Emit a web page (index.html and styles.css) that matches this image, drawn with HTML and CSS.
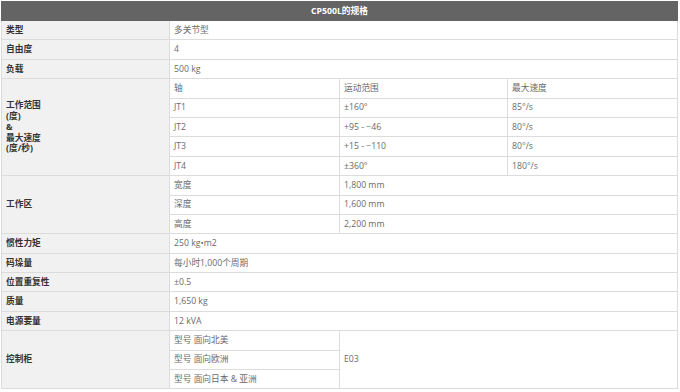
FILE: index.html
```html
<!DOCTYPE html>
<html lang="zh-CN">
<head>
<meta charset="utf-8">
<title>CP500L的规格</title>
<link rel="stylesheet" href="styles.css">
</head>
<body>
<table class="spec">
  <colgroup>
    <col class="c1"><col class="c2"><col class="c3"><col class="c4">
  </colgroup>
  <thead>
    <tr class="head"><th colspan="4">CP500L的规格</th></tr>
  </thead>
  <tbody>
    <tr><th>类型</th><td colspan="3">多关节型</td></tr>
    <tr><th>自由度</th><td colspan="3">4</td></tr>
    <tr><th>负载</th><td colspan="3">500 kg</td></tr>
    <tr><th rowspan="5">工作范围<br>(度)<br>&amp;<br>最大速度<br>(度/秒)</th><td>轴</td><td>运动范围</td><td>最大速度</td></tr>
    <tr><td>JT1</td><td>±160°</td><td>85°/s</td></tr>
    <tr><td>JT2</td><td>+95 - −46</td><td>80°/s</td></tr>
    <tr><td>JT3</td><td>+15 - −110</td><td>80°/s</td></tr>
    <tr><td>JT4</td><td>±360°</td><td>180°/s</td></tr>
    <tr><th rowspan="3">工作区</th><td>宽度</td><td colspan="2">1,800 mm</td></tr>
    <tr><td>深度</td><td colspan="2">1,600 mm</td></tr>
    <tr><td>高度</td><td colspan="2">2,200 mm</td></tr>
    <tr><th>惯性力矩</th><td colspan="3">250 kg•m2</td></tr>
    <tr><th>码垛量</th><td colspan="3">每小时1,000个周期</td></tr>
    <tr><th>位置重复性</th><td colspan="3">±0.5</td></tr>
    <tr><th>质量</th><td colspan="3">1,650 kg</td></tr>
    <tr><th>电源要量</th><td colspan="3">12 kVA</td></tr>
    <tr><th rowspan="3">控制柜</th><td>型号 面向北美</td><td rowspan="3" colspan="2">E03</td></tr>
    <tr><td>型号 面向欧洲</td></tr>
    <tr><td>型号 面向日本 &amp; 亚洲</td></tr>
  </tbody>
</table>
</body>
</html>
```
FILE: styles.css
```css
html, body {
  margin: 0;
  padding: 0;
  background: #ffffff;
}
body {
  padding: 1px 0 0 1px;
  font-family: "Open Sans", "Noto Sans CJK SC", sans-serif;
  font-size: 8.7px;
}
.spec {
  border-collapse: collapse;
  table-layout: fixed;
  width: 676px;
  border: 1px solid #d8d8d8;
}
.c1 { width: 168px; }
.c2 { width: 170px; }
.c3 { width: 168px; }
.c4 { width: 170px; }
.spec tr {
  height: 19.4px;
}
.spec .head {
  height: 19px;
}
.spec .head th {
  background: #646464;
  color: #ffffff;
  font-weight: 700;
  text-align: center;
  border: 1px solid #646464;
  padding: 0;
}
.spec th,
.spec td {
  border: 1px solid #dcdcdc;
  padding: 0 0 0 4px;
  line-height: 10.7px;
  vertical-align: middle;
  text-align: left;
}
.spec tbody th {
  background: #f1f1f1;
  color: #333333;
  font-weight: 700;
}
.spec td {
  background: #ffffff;
  color: #6a6a6a;
  font-weight: 400;
}
```
